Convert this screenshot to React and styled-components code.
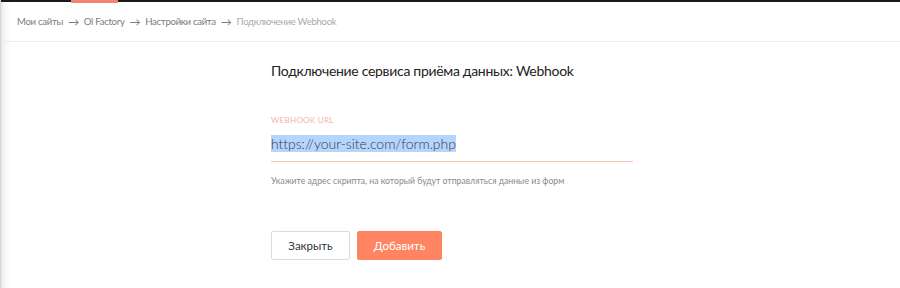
import React from 'react';
import styled, { createGlobalStyle } from 'styled-components';

const GlobalStyle = createGlobalStyle`
  html, body {
    margin: 0;
    padding: 0;
    background: #fff;
    font-family: 'Lato', 'Noto Sans', sans-serif;
  }
  ::selection {
    background: #b4d5fe;
  }
`;

// Page with a soft shadow on the left edge
const Page = styled.div`
  width: 900px;
  height: 288px;
  overflow: hidden;
  background: linear-gradient(to right, #e4e4e4 0, #f6f6f6 3px, #fff 10px);
  border-left: 1px solid #d6d6d6;
  box-sizing: border-box;
`;

// Thin dark strip at the very top with the active tab marker
const TopStrip = styled.div`
  height: 2px;
  background: #1a1a1a;
  display: flex;
`;

const TabMarker = styled.span`
  margin-left: 70px;
  width: 47px;
  height: 3px;
  background: #f28770;
`;

const Header = styled.header`
  height: 39px;
  display: flex;
  align-items: center;
  padding-left: 16px;
  border-bottom: 1px solid #ececec;
  font-size: 9.6px;
  letter-spacing: -0.3px;
`;

const Crumb = styled.span`
  color: ${p => (p.current ? '#ababab' : '#7b7b7b')};
`;

const Arrow = styled.span`
  color: #7b7b7b;
  font-size: 11px;
  margin: 0 5px;
`;

const Content = styled.main`
  width: 362px;
  margin-left: 270px;
  padding-top: 19px;
`;

const Title = styled.h1`
  margin: 0;
  font-size: 14px;
  font-weight: 400;
  letter-spacing: -0.3px;
  color: #222;
  line-height: 20px;
`;

const Field = styled.div`
  margin-top: 34px;
  display: flex;
  flex-direction: column;
`;

const Label = styled.label`
  font-size: 8px;
  letter-spacing: 0.3px;
  text-transform: uppercase;
  color: #f6b3a3;
  line-height: 10px;
`;

const UrlValue = styled.div`
  margin-top: 9px;
  padding-bottom: 8px;
  border-bottom: 1px solid #f7c3b7;
  font-size: 14px;
  font-weight: 300;
  letter-spacing: -0.05px;
  line-height: 19px;
  color: #3a3a3a;
`;

const Selected = styled.span`
  background: #b4d5fe;
`;

const Hint = styled.p`
  margin: 13px 0 0;
  font-size: 8.7px;
  color: #8a8a8a;
  line-height: 12px;
`;

const Actions = styled.div`
  margin-top: 44px;
  display: flex;
  gap: 7px;
`;

const Button = styled.button`
  height: 29px;
  padding: 0;
  width: ${p => p.w}px;
  border-radius: 2px;
  font-family: inherit;
  font-size: 11.5px;
  cursor: pointer;
  border: 1px solid ${p => (p.primary ? '#ff8562' : '#dcdcdc')};
  background: ${p => (p.primary ? '#ff8562' : '#fff')};
  color: ${p => (p.primary ? '#fff' : '#333')};
`;

export default function App() {
  return (
    <Page>
      <GlobalStyle />
      <TopStrip>
        <TabMarker />
      </TopStrip>
      <Header>
        <Crumb>Мои сайты</Crumb>
        <Arrow>→</Arrow>
        <Crumb>Ol Factory</Crumb>
        <Arrow>→</Arrow>
        <Crumb>Настройки сайта</Crumb>
        <Arrow>→</Arrow>
        <Crumb current>Подключение Webhook</Crumb>
      </Header>
      <Content>
        <Title>Подключение сервиса приёма данных: Webhook</Title>
        <Field>
          <Label>Webhook URL</Label>
          <UrlValue>
            <Selected>https://your-site.com/form.php</Selected>
          </UrlValue>
          <Hint>Укажите адрес скрипта, на который будут отправляться данные из форм</Hint>
        </Field>
        <Actions>
          <Button w={79}>Закрыть</Button>
          <Button primary w={85}>Добавить</Button>
        </Actions>
      </Content>
    </Page>
  );
}
